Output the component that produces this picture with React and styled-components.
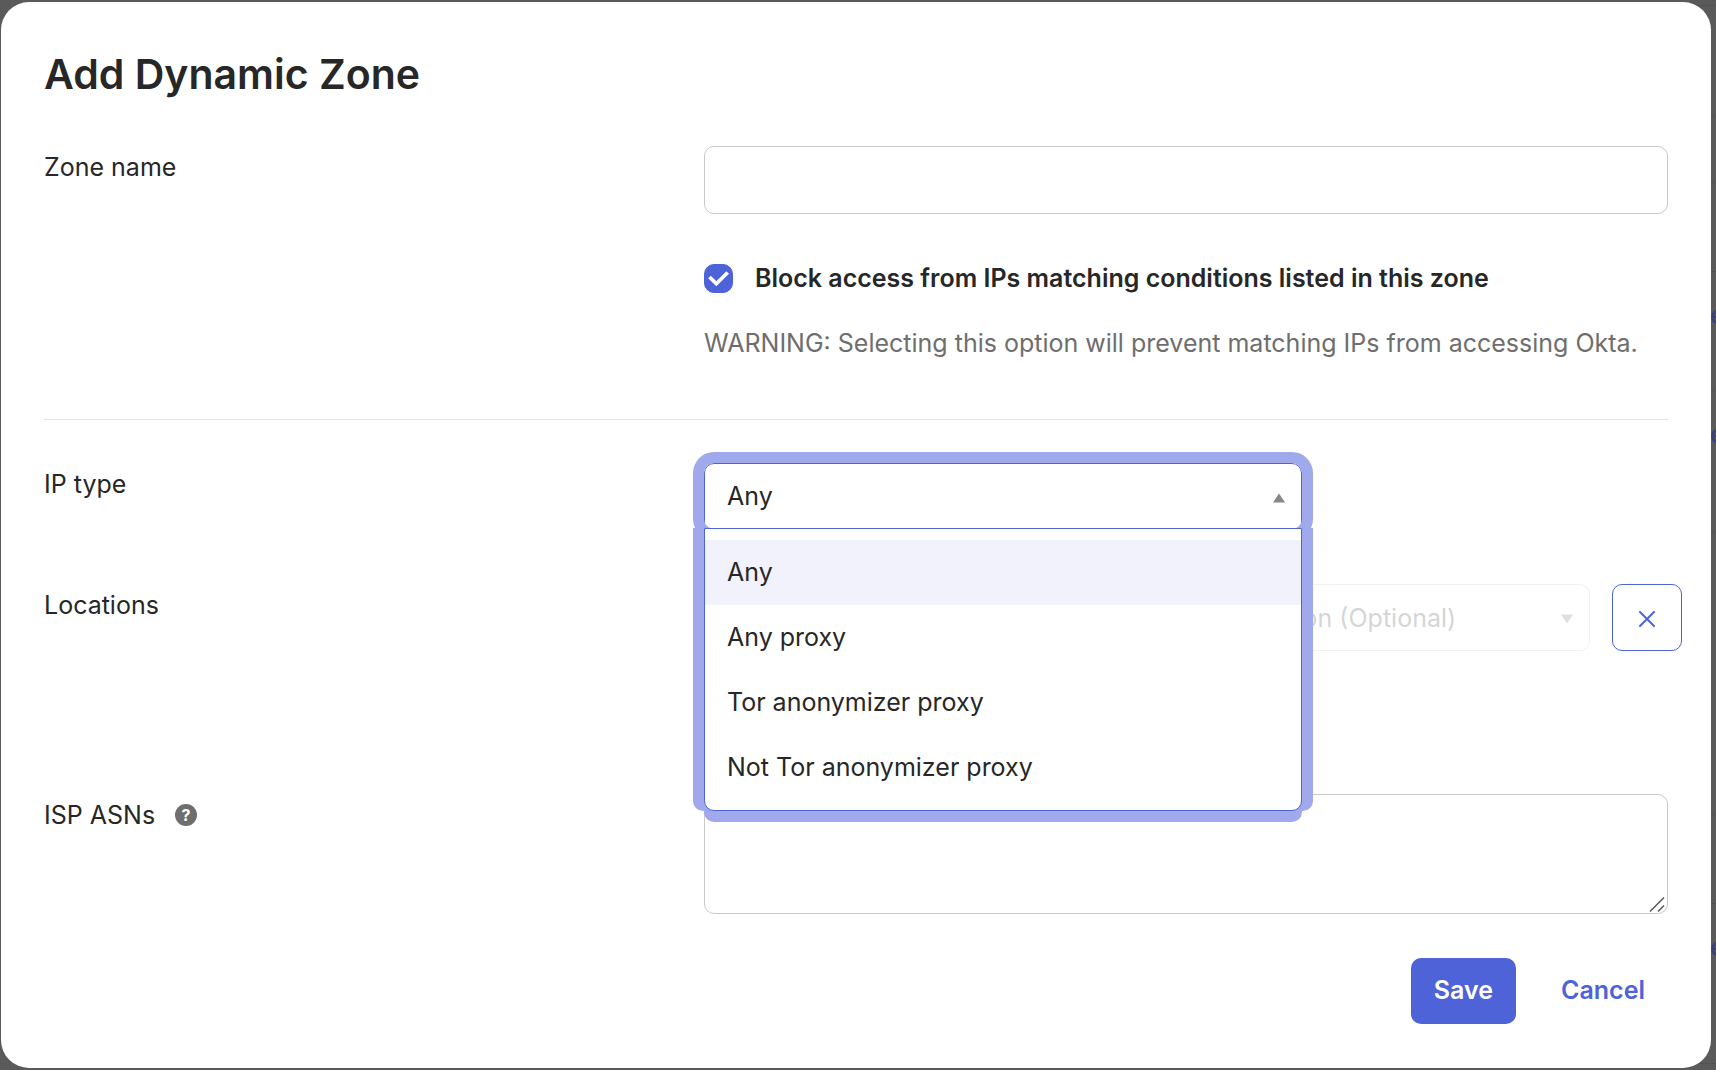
import React, { useState } from "react";
import styled, { createGlobalStyle } from "styled-components";

const c = {
  ink: "#272727",
  muted: "#6e6e6e",
  line: "#c9c9c9",
  rule: "#e0e0e0",
  primary: "#4f63d9",
  ring: "#9fa9ec",
  hover: "#f2f2fd",
};

const GlobalStyle = createGlobalStyle`
  *, *::before, *::after { box-sizing: border-box; }
  body { margin: 0; background: #5a5a5a; color: ${c.ink}; }
  body, button, input, select, textarea {
    font-family: Inter, "Liberation Sans", sans-serif;
    font-size: 25px;
  }
`;

const Screen = styled.div`
  display: grid;
  min-height: 100vh;
`;

const Page = styled.aside`
  grid-area: 1 / 1;
  justify-self: end;
  width: 20px;
  overflow: hidden;
`;

const PageRow = styled.div`
  height: ${(p) => p.$h}px;
  padding-left: 14px;
  border-bottom: 1px solid #525252;
`;

const PageLink = styled.a`
  display: block;
  padding-top: 28px;
  color: #3b4175;
  font-weight: 600;
  line-height: 30px;
  text-decoration: none;
`;

const Dialog = styled.form`
  grid-area: 1 / 1;
  z-index: 1;
  margin: 2px 5px 2px 1px;
  padding: 44px 43px 44px;
  background: #fff;
  border-radius: 28px;
`;

const Title = styled.h1`
  margin: 0 0 44px;
  font-size: 41px;
  font-weight: 600;
  line-height: 56px;
`;

const Row = styled.div`
  display: grid;
  grid-template-columns: 660px minmax(0, 1fr);
  align-items: start;
  margin-bottom: ${(p) => p.$gap}px;
`;

const LabelCell = styled.div`
  display: flex;
  align-items: center;
  gap: 20px;
  line-height: 42px;
`;

const Field = styled.div`
  position: relative;
`;

const TextInput = styled.input`
  display: block;
  width: 100%;
  height: 68px;
  padding: 0 22px;
  border: 1px solid ${c.line};
  border-radius: 10px;
  background: #fff;
`;

const CheckLabel = styled.label`
  display: flex;
  align-items: center;
  gap: 22px;
  margin-top: 46px;
  font-weight: 600;
  line-height: 36px;
`;

const CheckWrap = styled.span`
  display: grid;
  width: 29px;
  height: 29px;
  svg { grid-area: 1 / 1; pointer-events: none; }
`;

const CheckInput = styled.input`
  grid-area: 1 / 1;
  width: 29px;
  height: 29px;
  margin: 0;
  appearance: none;
  border: 1px solid ${c.line};
  border-radius: 10px;
  &:checked { background: ${c.primary}; border-color: ${c.primary}; }
  &:not(:checked) + svg { display: none; }
`;

const Hint = styled.p`
  margin: 29px 0 0;
  color: ${c.muted};
  line-height: 36px;
`;

const Rule = styled.hr`
  height: 1px;
  margin: 0 0 43px;
  border: 0;
  background: ${c.rule};
`;

const SelectWrap = styled.div`
  position: relative;
  display: grid;
  width: ${(p) => p.$width || "auto"};
  opacity: ${(p) => (p.$faded ? 0.25 : 1)};
  svg {
    grid-area: 1 / 1;
    place-self: center end;
    margin: 3px 16px 0 0;
    pointer-events: none;
  }
`;

const Select = styled.select`
  grid-area: 1 / 1;
  width: 100%;
  height: ${(p) => (p.$open ? 66 : 67)}px;
  padding: 0 22px;
  appearance: none;
  border: 1px solid ${(p) => (p.$open ? c.primary : c.line)};
  border-radius: ${(p) => (p.$open ? "10px 10px 0 0" : "10px")};
  background: #fff;
  color: ${(p) => (p.$open ? c.ink : "#5c5c5c")};
  opacity: 1;
`;

const Ring = styled.div`
  position: absolute;
  inset: 0;
  border-radius: 10px;
  box-shadow: 0 0 0 11px ${c.ring};
`;

const Menu = styled.ul`
  position: absolute;
  z-index: 2;
  top: 65px;
  left: 0;
  right: 0;
  margin: 0;
  padding: 11px 0 10px;
  list-style: none;
  background: #fff;
  border: 1px solid ${c.primary};
  border-radius: 0 0 10px 10px;
  box-shadow: 0 11px 0 ${c.ring}, 11px 0 0 ${c.ring}, -11px 0 0 ${c.ring};
`;

const Option = styled.li`
  padding: 0 22px;
  line-height: 65px;
  background: ${(p) => (p.$active ? c.hover : "transparent")};
`;

const Locations = styled.div`
  display: grid;
  grid-template-columns: 1fr 1fr 70px;
  gap: 22px;
  margin-right: -14px;
`;

const RemoveButton = styled.button`
  display: grid;
  place-items: center;
  height: 67px;
  padding: 2px 0 0;
  border: 1px solid ${c.primary};
  border-radius: 10px;
  background: #fff;
  color: ${c.primary};
`;

const HelpButton = styled.button`
  width: 22px;
  height: 22px;
  padding: 0;
  border: 0;
  border-radius: 50%;
  background: ${c.muted};
  color: #fff;
  font-size: 16px;
  font-weight: 700;
  line-height: 22px;
`;

const TextArea = styled.textarea`
  display: block;
  width: 100%;
  height: 120px;
  padding: 16px 22px;
  border: 1px solid ${c.line};
  border-radius: 10px;
  background: #fff;
  resize: none;
`;

const Grip = styled.svg`
  position: absolute;
  right: 2px;
  bottom: 1px;
`;

const Footer = styled.footer`
  display: flex;
  justify-content: flex-end;
  gap: 22px;
`;

const Button = styled.button`
  height: 66px;
  padding: 0 23px 2px;
  border: 0;
  border-radius: 10px;
  background: ${(p) => (p.$primary ? c.primary : "transparent")};
  color: ${(p) => (p.$primary ? "#fff" : c.primary)};
  font-weight: 600;
`;

const TYPES = ["Any", "Any proxy", "Tor anonymizer proxy", "Not Tor anonymizer proxy"];

const PAGE_ROWS = [
  { h: 6 }, { h: 111 }, { h: 66 }, { h: 89 },
  { h: 119, link: true }, { h: 142, link: true },
  { h: 282 }, { h: 89 }, { h: 160, link: true },
];

const Triangle = ({ up }) => (
  <svg width="13" height="10" viewBox="0 0 13 10" aria-hidden="true">
    <path d={up ? "M6 0.500L12.200 9.500H0Z" : "M6 9.500L12.200 0.500H0Z"} fill="#888" />
  </svg>
);

export default function App() {
  const [type, setType] = useState("Any");
  const [block, setBlock] = useState(true);

  return (
    <>
      <GlobalStyle />
      <Screen>
        <Page>
          {PAGE_ROWS.map((row, i) => (
            <PageRow key={i} $h={row.h}>
              {row.link && <PageLink href="#zone">e</PageLink>}
            </PageRow>
          ))}
        </Page>
        <Dialog onSubmit={(e) => e.preventDefault()}>
          <Title>Add Dynamic Zone</Title>

          <Row $gap={58}>
            <LabelCell><label htmlFor="zone-name">Zone name</label></LabelCell>
            <Field>
              <TextInput id="zone-name" type="text" />
              <CheckLabel>
                <CheckWrap>
                  <CheckInput type="checkbox" checked={block} onChange={(e) => setBlock(e.target.checked)} />
                  <svg width="29" height="29" viewBox="0 0 29 29" fill="none" aria-hidden="true">
                    <path d="M5.500 13L12.300 19.700L23.700 8.500" stroke="#fff" strokeWidth="3.700" />
                  </svg>
                </CheckWrap>
                Block access from IPs matching conditions listed in this zone
              </CheckLabel>
              <Hint>WARNING: Selecting this option will prevent matching IPs from accessing Okta.</Hint>
            </Field>
          </Row>

          <Rule />

          <Row $gap={55}>
            <LabelCell><label htmlFor="ip-type">IP type</label></LabelCell>
            <SelectWrap $width="598px">
              <Ring />
              <Select id="ip-type" $open value={type} onChange={(e) => setType(e.target.value)}>
                {TYPES.map((t) => <option key={t}>{t}</option>)}
              </Select>
              <Triangle up />
              <Menu role="listbox" aria-label="IP type">
                {TYPES.map((t) => (
                  <Option key={t} role="option" aria-selected={t === type} $active={t === type} onClick={() => setType(t)}>
                    {t}
                  </Option>
                ))}
              </Menu>
            </SelectWrap>
          </Row>

          <Row $gap={143}>
            <LabelCell id="locations">Locations</LabelCell>
            <Locations role="group" aria-labelledby="locations">
              <SelectWrap>
                <Select aria-label="Country" />
              </SelectWrap>
              <SelectWrap $faded>
                <Select aria-label="State/Region" disabled>
                  <option>State/Region (Optional)</option>
                </Select>
                <Triangle />
              </SelectWrap>
              <RemoveButton type="button" aria-label="Remove location">
                <svg width="16" height="16" viewBox="0 0 16 16" aria-hidden="true">
                  <path d="M1 1L15 15M15 1L1 15" stroke="currentColor" strokeWidth="2" strokeLinecap="round" />
                </svg>
              </RemoveButton>
            </Locations>
          </Row>

          <Row $gap={44}>
            <LabelCell>
              <label htmlFor="asns">ISP ASNs</label>
              <HelpButton type="button" aria-label="About ISP ASNs">?</HelpButton>
            </LabelCell>
            <Field>
              <TextArea id="asns" />
              <Grip width="17" height="17" viewBox="0 0 17 17" aria-hidden="true">
                <path d="M1 15.500L15 1.500M9 15.500L15 9.500" stroke="#555" strokeWidth="1.500" />
              </Grip>
            </Field>
          </Row>

          <Footer>
            <Button type="submit" $primary>Save</Button>
            <Button type="button">Cancel</Button>
          </Footer>
        </Dialog>
      </Screen>
    </>
  );
}
